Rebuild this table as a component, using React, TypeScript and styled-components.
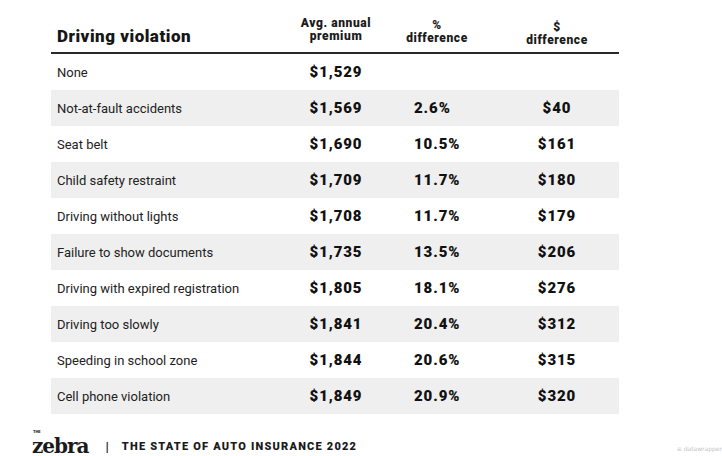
import { FC } from "react";
import styled, { createGlobalStyle } from "styled-components";

interface Row {
  label: string;
  premium: string;
  pct: string;
  diff: string;
}

const rows: Row[] = [
  { label: "None", premium: "$1,529", pct: "", diff: "" },
  { label: "Not-at-fault accidents", premium: "$1,569", pct: "2.6%", diff: "$40" },
  { label: "Seat belt", premium: "$1,690", pct: "10.5%", diff: "$161" },
  { label: "Child safety restraint", premium: "$1,709", pct: "11.7%", diff: "$180" },
  { label: "Driving without lights", premium: "$1,708", pct: "11.7%", diff: "$179" },
  { label: "Failure to show documents", premium: "$1,735", pct: "13.5%", diff: "$206" },
  { label: "Driving with expired registration", premium: "$1,805", pct: "18.1%", diff: "$276" },
  { label: "Driving too slowly", premium: "$1,841", pct: "20.4%", diff: "$312" },
  { label: "Speeding in school zone", premium: "$1,844", pct: "20.6%", diff: "$315" },
  { label: "Cell phone violation", premium: "$1,849", pct: "20.9%", diff: "$320" },
];

const GlobalStyle = createGlobalStyle`
  html, body {
    margin: 0;
    padding: 0;
    background: #ffffff;
  }
  body {
    font-family: Roboto, "Liberation Sans", sans-serif;
    color: #1d1d1d;
  }
`;

const Page = styled.div`
  width: 722px;
  box-sizing: border-box;
  padding: 20px 0 0 51px;
  display: flex;
  flex-direction: column;
`;

const Table = styled.div`
  width: 568px;
  display: flex;
  flex-direction: column;
`;

const GRID = "234px 102px 100px 132px";

const HeaderRow = styled.div`
  display: grid;
  grid-template-columns: ${GRID};
  align-items: end;
  padding-bottom: 6px;
  border-bottom: 2px solid #2a2a2a;
`;

const MainTitle = styled.div`
  padding-left: 6px;
  font-size: 17px;
  font-weight: 900;
  letter-spacing: 0.5px;
  color: #161616;
  line-height: 20px;
`;

const ColTitle = styled.div<{ $shift?: number; $pad?: number }>`
  font-size: 12px;
  font-weight: 900;
  letter-spacing: 0.6px;
  line-height: 13px;
  text-align: center;
  color: #1b1b1b;
  padding-left: ${(p) => p.$pad ?? 0}px;
  transform: translateY(${(p) => p.$shift ?? 0}px);
`;

const BodyRow = styled.div<{ $shaded: boolean }>`
  display: grid;
  grid-template-columns: ${GRID};
  align-items: center;
  height: 36px;
  background: ${(p) => (p.$shaded ? "#efefef" : "#ffffff")};
`;

const Label = styled.div`
  padding-left: 6px;
  font-size: 13px;
  color: #222;
`;

const Value = styled.div<{ $align?: string; $pad?: number }>`
  font-size: 15px;
  font-weight: 900;
  letter-spacing: 0.9px;
  color: #111;
  text-align: ${(p) => p.$align ?? "center"};
  padding-left: ${(p) => p.$pad ?? 0}px;
`;

const Footer = styled.div`
  margin-top: 16px;
  margin-left: -19px;
  width: 690px;
  display: flex;
  align-items: flex-end;
`;

const Logo = styled.div`
  position: relative;
  font-family: "DejaVu Serif", "Liberation Serif", serif;
  font-weight: bold;
  font-size: 20px;
  line-height: 16px;
  letter-spacing: -1px;
  color: #1a1a1a;
  padding-top: 8px;
`;

const LogoThe = styled.span`
  position: absolute;
  top: 0;
  left: 1px;
  font-family: Roboto, sans-serif;
  font-size: 4px;
  line-height: 4px;
  font-weight: 900;
  letter-spacing: 0;
`;

const Divider = styled.span`
  margin: 0 13px 0 17px;
  font-size: 13px;
  font-weight: 700;
  line-height: 14px;
  color: #222;
`;

const Tagline = styled.span`
  font-size: 11px;
  font-weight: 900;
  letter-spacing: 1.2px;
  line-height: 14px;
  color: #1a1a1a;
`;

const Watermark = styled.span`
  margin-left: auto;
  font-family: "DejaVu Sans", sans-serif;
  font-size: 6px;
  line-height: 8px;
  color: #c4c4c4;
  padding-bottom: 1px;
`;

const App: FC = () => {
  return (
    <>
      <GlobalStyle />
      <Page>
        <Table>
          <HeaderRow>
            <MainTitle>Driving violation</MainTitle>
            <ColTitle $shift={-3}>
              Avg. annual
              <br />
              premium
            </ColTitle>
            <ColTitle $shift={-1}>
              %
              <br />
              difference
            </ColTitle>
            <ColTitle $pad={8} $shift={1}>
              $
              <br />
              difference
            </ColTitle>
          </HeaderRow>
          {rows.map((r, i) => (
            <BodyRow key={r.label} $shaded={i % 2 === 1}>
              <Label>{r.label}</Label>
              <Value>{r.premium}</Value>
              <Value $align="left" $pad={27}>
                {r.pct}
              </Value>
              <Value $pad={8}>{r.diff}</Value>
            </BodyRow>
          ))}
        </Table>
        <Footer>
          <Logo>
            <LogoThe>THE</LogoThe>
            zebra
          </Logo>
          <Divider>|</Divider>
          <Tagline>THE STATE OF AUTO INSURANCE 2022</Tagline>
          <Watermark>≡ datawrapper</Watermark>
        </Footer>
      </Page>
    </>
  );
};

export default App;
